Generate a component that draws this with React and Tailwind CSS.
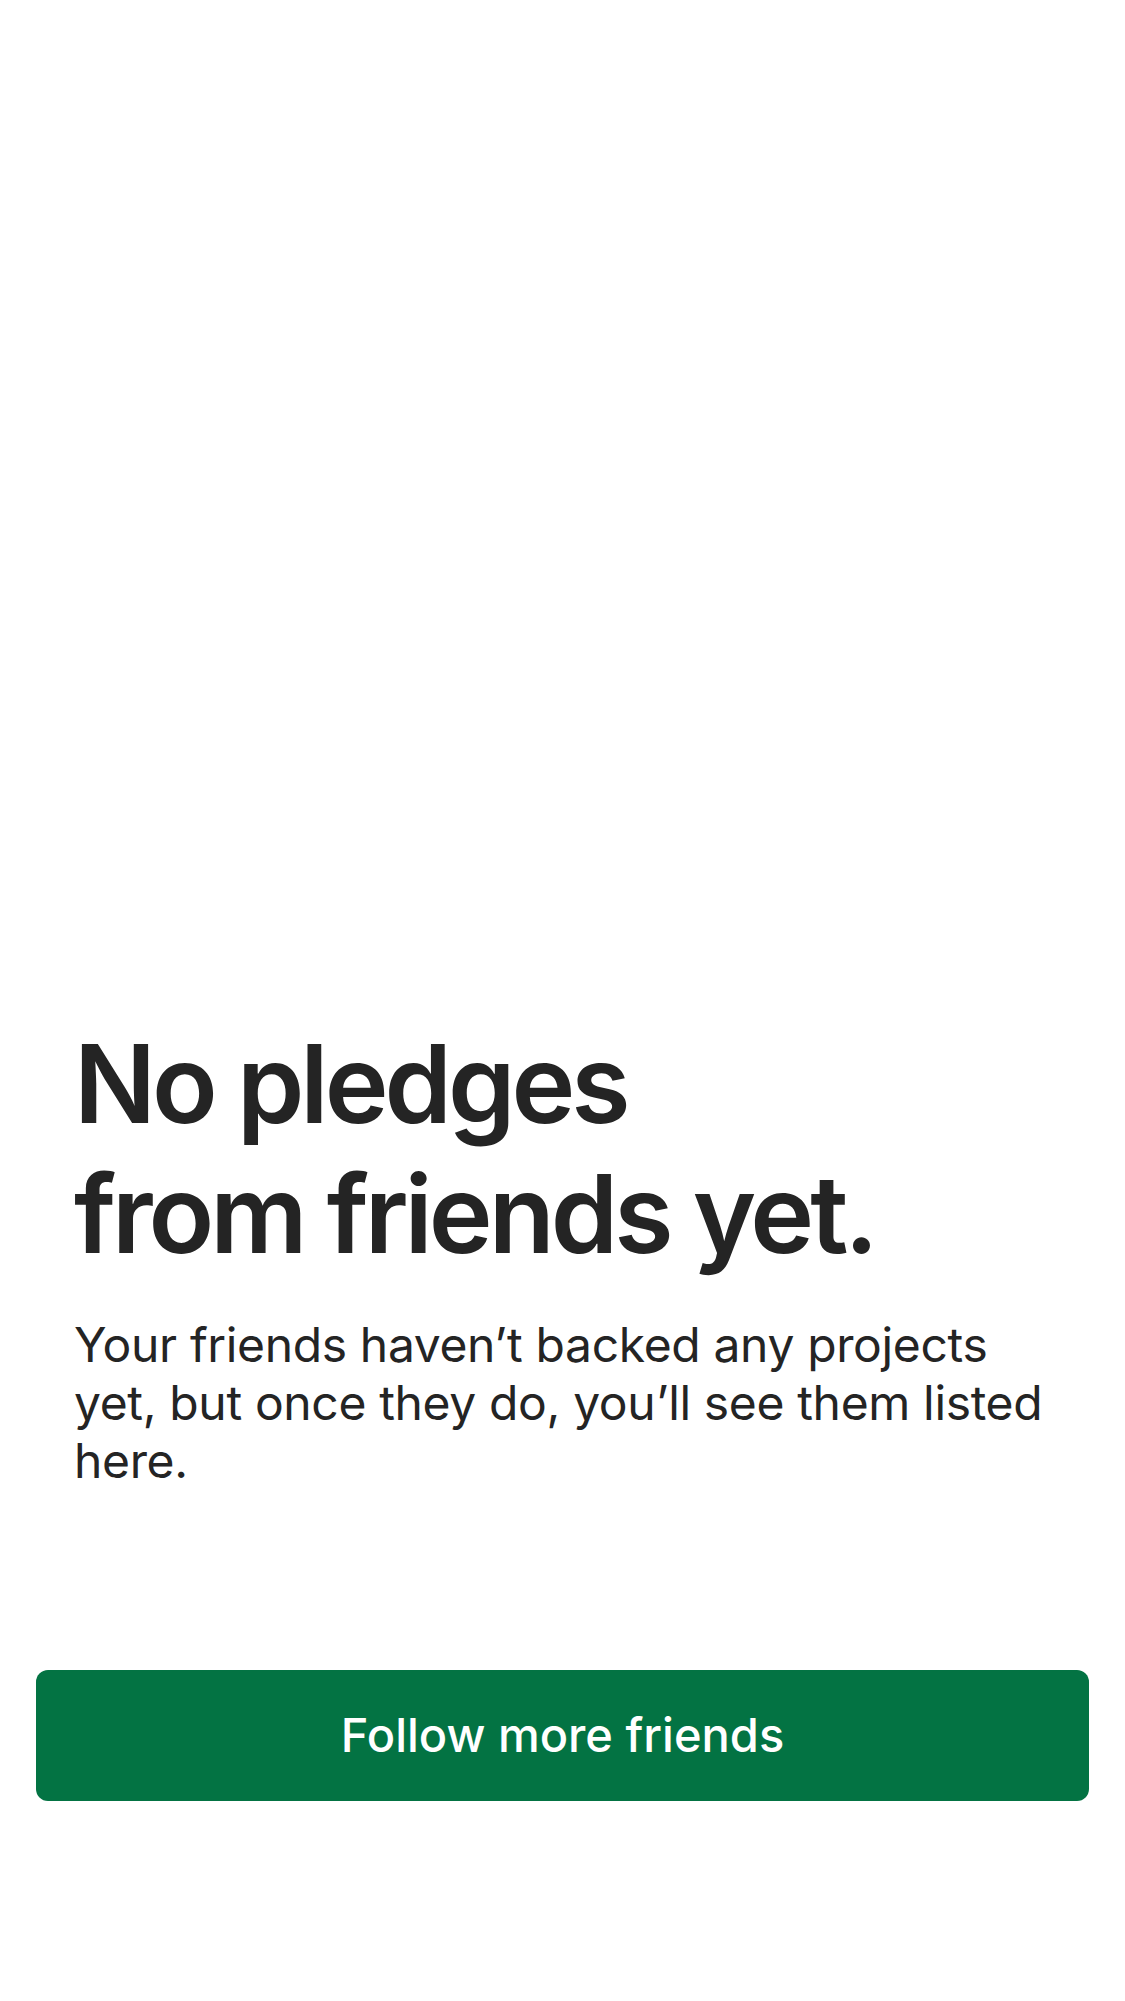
import React from 'react';

const App = () => {
    return (
        <div className="w-[1125px] h-[2001px] bg-white flex flex-col" style={{ fontFamily: 'Inter, "Noto Sans", sans-serif' }}>
            <div className="pt-[1019px] pl-[74px] pr-[50px]">
                <h1 className="text-[108px] leading-[130px] font-semibold text-[#242424] tracking-[-4px]">
                    No pledges
                    <br />
                    from friends yet.
                </h1>
                <p className="mt-[37px] text-[48px] leading-[58px] text-[#242424] tracking-[-0.35px]">
                    Your friends haven’t backed any projects yet, but once they do, you’ll see them listed here.
                </p>
            </div>
            <div className="px-[36px] pt-[180px]">
                <button className="w-full h-[131px] rounded-[12px] bg-[#037343] text-white text-[47px] font-medium flex items-center justify-center">
                    Follow more friends
                </button>
            </div>
        </div>
    );
};

export default App;
